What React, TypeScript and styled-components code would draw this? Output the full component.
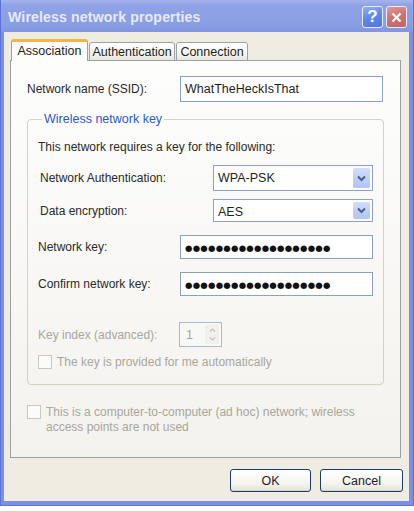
import React from 'react';
import styled, { createGlobalStyle } from 'styled-components';

const GlobalStyle = createGlobalStyle`
  html, body {
    margin: 0;
    padding: 0;
    background: #ffffff;
  }
  body {
    font-family: 'Liberation Sans', Arial, sans-serif;
    font-size: 12px;
    color: #2a2a2a;
  }
`;

// Window chrome
const Window = styled.div`
  width: 414px;
  height: 506px;
  box-sizing: border-box;
  display: flex;
  flex-direction: column;
  background: #7b8fe3;
  border: 1px solid #5d71d6;
  border-top: none;
  padding-bottom: 4px;
`;

const TitleBar = styled.div`
  height: 32px;
  flex-shrink: 0;
  display: flex;
  align-items: center;
  justify-content: space-between;
  padding: 0 6px 0 7px;
  background: linear-gradient(180deg, #a4b3ec 0%, #8fa2e6 18%, #8a9ee4 80%, #8194e0 100%);
`;

const TitleText = styled.span`
  font-family: 'Liberation Sans', Arial, sans-serif;
  font-weight: bold;
  font-size: 14.2px;
  color: #e6eafb;
  letter-spacing: 0.1px;
  padding-top: 1px;
`;

const TitleButtons = styled.div`
  display: flex;
  gap: 3px;
  margin-top: 2px;
`;

const CaptionButton = styled.div<{ $variant: 'help' | 'close' }>`
  width: 21px;
  height: 22px;
  box-sizing: border-box;
  border: 1px solid #e8ecfb;
  border-radius: 3px;
  display: flex;
  align-items: center;
  justify-content: center;
  background: ${p =>
    p.$variant === 'close'
      ? 'linear-gradient(160deg, #e09a94 0%, #cc7370 50%, #c06464 100%)'
      : 'linear-gradient(160deg, #8fb0f4 0%, #5f86ea 50%, #4f76e2 100%)'};
  color: #ffffff;
  font-weight: bold;
  font-size: 17px;
`;

const Body = styled.div`
  flex: 1;
  display: flex;
  flex-direction: column;
  margin: 0 4px 0 3px;
  padding: 7px 8px 0 6px;
  background: #efede2;
`;

// Tabs
const TabStrip = styled.div`
  display: flex;
  align-items: flex-end;
  height: 22px;
  padding-left: 1px;
  margin-bottom: -1px;
  position: relative;
  z-index: 1;
`;

const Tab = styled.div<{ $active?: boolean; $width: number }>`
  width: ${p => p.$width}px;
  box-sizing: border-box;
  height: ${p => (p.$active ? 22 : 19)}px;
  margin-right: 1px;
  border: 1px solid #9aa3a4;
  border-bottom: ${p => (p.$active ? 'none' : '1px solid #9aa3a4')};
  border-top: ${p => (p.$active ? '3px solid #f2b447' : '1px solid #9aa3a4')};
  border-radius: 3px 3px 0 0;
  background: ${p => (p.$active ? '#fcfcfb' : 'linear-gradient(180deg, #ffffff 0%, #f3f2ee 70%, #e7e5dc 100%)')};
  display: flex;
  align-items: center;
  justify-content: center;
  font-size: 12.5px;
  color: #1e1e1e;
  padding-bottom: ${p => (p.$active ? 2 : 0)}px;
`;

const Panel = styled.div`
  height: 398px;
  box-sizing: border-box;
  border: 1px solid #9aa3a4;
  background: linear-gradient(180deg, #fdfdfc 0%, #f8f7f4 60%, #f3f2ed 100%);
  padding: 15px 16px 0 16px;
  display: flex;
  flex-direction: column;
`;

// Rows and labels
const Row = styled.div<{ $gap?: number; $height: number; $indent?: number }>`
  display: flex;
  align-items: center;
  height: ${p => p.$height}px;
  margin-top: ${p => p.$gap ?? 0}px;
  padding-left: ${p => p.$indent ?? 0}px;
`;

const Label = styled.span<{ $width?: number; $disabled?: boolean }>`
  width: ${p => (p.$width ? `${p.$width}px` : 'auto')};
  flex-shrink: 0;
  color: ${p => (p.$disabled ? '#a8a79c' : '#2a2a2a')};
  white-space: nowrap;
`;

const TextBox = styled.div<{ $width: number; $height: number }>`
  width: ${p => p.$width}px;
  height: ${p => p.$height}px;
  box-sizing: border-box;
  border: 1px solid #8aa2c8;
  background: #ffffff;
  display: flex;
  align-items: center;
  padding-left: 4px;
  font-size: 12.5px;
  color: #1e1e1e;
`;

const Dots = styled.span`
  font-family: 'DejaVu Sans', sans-serif;
  font-size: 8.5px;
  letter-spacing: 0.25px;
  color: #111;
  padding-top: 1px;
`;

const Combo = styled.div<{ $height: number }>`
  width: 160px;
  height: ${p => p.$height}px;
  box-sizing: border-box;
  border: 1px solid #8aa2c8;
  background: #ffffff;
  display: flex;
  align-items: center;
  justify-content: space-between;
  padding: 2px 2px 2px 4px;
  font-size: 12.5px;
  color: #1e1e1e;
`;

const ComboButton = styled.div`
  width: 17px;
  align-self: stretch;
  border-radius: 2px;
  background: linear-gradient(180deg, #d2defb 0%, #bccdf8 60%, #b0c4f5 100%);
  display: flex;
  align-items: center;
  justify-content: center;
`;

const GroupBox = styled.fieldset`
  margin: 9px 0 0 0;
  padding: 0 0 14px 10px;
  border: 1px solid #d4d3c6;
  border-radius: 4px;
  min-width: 0;
`;

const GroupTitle = styled.legend`
  margin-left: 4px;
  padding: 0 2px;
  color: #2a5ad8;
  font-size: 12.5px;
  line-height: 16px;
`;

const SpinBox = styled.div`
  width: 43px;
  height: 25px;
  box-sizing: border-box;
  border: 1px solid #a9bad6;
  background: #f8f8f6;
  display: flex;
  align-items: center;
  justify-content: space-between;
  padding: 2px 2px 2px 6px;
  color: #a8a79c;
  font-size: 12.5px;
`;

const SpinArrows = styled.div`
  width: 14px;
  align-self: stretch;
  display: flex;
  flex-direction: column;
  align-items: center;
  justify-content: space-around;
  background: #f1f0ea;
`;

const CheckBox = styled.span`
  width: 14px;
  height: 14px;
  box-sizing: border-box;
  border: 1px solid #cac9bd;
  background: #fbfbf9;
  flex-shrink: 0;
`;

const CheckRow = styled.div<{ $gap: number; $indent?: number }>`
  display: flex;
  align-items: flex-start;
  gap: 5px;
  margin-top: ${p => p.$gap}px;
  padding-left: ${p => p.$indent ?? 0}px;
  color: #a8a79c;
  line-height: 15px;
`;

const ButtonRow = styled.div`
  display: flex;
  justify-content: flex-end;
  gap: 9px;
  margin: 11px -2px 0 0;
`;

const Button = styled.div<{ $width: number }>`
  width: ${p => p.$width}px;
  height: 23px;
  box-sizing: border-box;
  border: 1px solid #1d3a6a;
  border-radius: 3px;
  background: linear-gradient(180deg, #ffffff 0%, #f6f5f0 60%, #e6e4da 100%);
  display: flex;
  align-items: center;
  justify-content: center;
  font-size: 12.5px;
  color: #1e1e1e;
  box-shadow: inset 0 -1px 0 #d6d4c8;
`;

const Chevron: React.FC = () => (
  <svg width="9" height="7" viewBox="0 0 9 7">
    <path d="M1 1.5 L4.5 5 L8 1.5" fill="none" stroke="#4d6185" strokeWidth="2" />
  </svg>
);

const SpinArrow: React.FC<{ up?: boolean }> = ({ up }) => (
  <svg width="7" height="4" viewBox="0 0 7 4">
    <path d={up ? 'M1 3.5 L3.5 1 L6 3.5' : 'M1 0.5 L3.5 3 L6 0.5'} fill="none" stroke="#c4c3ba" strokeWidth="1.2" />
  </svg>
);

const PASSWORD_DOTS = '●'.repeat(19);

const App: React.FC = () => {
  return (
    <>
      <GlobalStyle />
      <Window>
        <TitleBar>
          <TitleText>Wireless network properties</TitleText>
          <TitleButtons>
            <CaptionButton $variant="help">?</CaptionButton>
            <CaptionButton $variant="close">
              <svg width="11" height="11" viewBox="0 0 11 11">
                <path d="M1.5 1.5 L9.5 9.5 M9.5 1.5 L1.5 9.5" stroke="#ffffff" strokeWidth="2.2" />
              </svg>
            </CaptionButton>
          </TitleButtons>
        </TitleBar>

        <Body>
          <TabStrip>
            <Tab $active $width={77}>Association</Tab>
            <Tab $width={86}>Authentication</Tab>
            <Tab $width={72}>Connection</Tab>
          </TabStrip>

          <Panel>
            <Row $height={26}>
              <Label $width={153}>Network name (SSID):</Label>
              <TextBox $width={203} $height={26}>WhatTheHeckIsThat</TextBox>
            </Row>

            <GroupBox>
              <GroupTitle>Wireless network key</GroupTitle>

              <Row $height={16} $gap={12}>
                <Label>This network requires a key for the following:</Label>
              </Row>

              <Row $height={26} $gap={10} $indent={2}>
                <Label $width={173}>Network Authentication:</Label>
                <Combo $height={26}>
                  <span>WPA-PSK</span>
                  <ComboButton><Chevron /></ComboButton>
                </Combo>
              </Row>

              <Row $height={23} $gap={8} $indent={2}>
                <Label $width={173}>Data encryption:</Label>
                <Combo $height={23}>
                  <span style={{ paddingTop: 3 }}>AES</span>
                  <ComboButton><Chevron /></ComboButton>
                </Combo>
              </Row>

              <Row $height={24} $gap={13}>
                <Label $width={142}>Network key:</Label>
                <TextBox $width={193} $height={24}><Dots>{PASSWORD_DOTS}</Dots></TextBox>
              </Row>

              <Row $height={24} $gap={13}>
                <Label $width={142}>Confirm network key:</Label>
                <TextBox $width={193} $height={24}><Dots>{PASSWORD_DOTS}</Dots></TextBox>
              </Row>

              <Row $height={25} $gap={26}>
                <Label $width={141} $disabled>Key index (advanced):</Label>
                <SpinBox>
                  <span>1</span>
                  <SpinArrows>
                    <SpinArrow up />
                    <SpinArrow />
                  </SpinArrows>
                </SpinBox>
              </Row>

              <CheckRow $gap={8}>
                <CheckBox />
                <span>The key is provided for me automatically</span>
              </CheckRow>
            </GroupBox>

            <CheckRow $gap={20}>
              <CheckBox />
              <span>
                This is a computer-to-computer (ad hoc) network; wireless
                <br />
                access points are not used
              </span>
            </CheckRow>
          </Panel>

          <ButtonRow>
            <Button $width={81}>OK</Button>
            <Button $width={83}>Cancel</Button>
          </ButtonRow>
        </Body>
      </Window>
    </>
  );
};

export default App;
